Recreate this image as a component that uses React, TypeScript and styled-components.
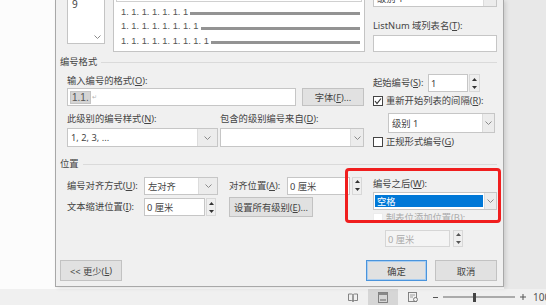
import React from "react";
import styled, { createGlobalStyle } from "styled-components";

const GlobalStyle = createGlobalStyle`
  html, body { margin: 0; padding: 0; }
  body { font-family: "Noto Sans", "Noto Sans CJK SC", sans-serif; }
`;

type MT = { $mt?: number };
const mt = (p: MT) => (p.$mt ? `margin-top: ${p.$mt}px;` : "");

const Screen = styled.div`
    width: 546px;
    height: 305px;
    overflow: hidden;
    display: flex;
    flex-direction: column;
    background: #fcfcfc;
    font-family: "Noto Sans", "Noto Sans CJK SC", sans-serif;
    font-size: 9.3px;
    color: #444;
`

const Workspace = styled.div`
    display: flex;
    height: 289px;
    flex: none;
`

const LeftMargin = styled.div`
    width: 55px;
    flex: none;
    background: #fcfcfc;
`

const RightPane = styled.div`
    flex: 1;
    background: #e8e8e8;
`

const Dialog = styled.div`
    position: relative;
    width: 449px;
    height: 287px;
    flex: none;
    box-sizing: border-box;
    border: 1px solid #a8a8a8;
    border-top: 0;
    background: #f0f0f0;
    padding: 0 6px 5px 4px;
    display: flex;
    flex-direction: column;
    box-shadow: 2px 1px 4px rgba(0, 0, 0, 0.12);
`

const TopArea = styled.div`
    display: flex;
    align-items: flex-start;
    gap: 8px;
    margin: -12px 0 0 7px;
`

const LevelList = styled.div`
    margin-top: 6px;
    width: 38px;
    height: 50px;
    box-sizing: border-box;
    background: #fff;
    border: 1px solid #c4c4c4;
    border-top: 0;
    padding: 4px 3px 4px 4px;
    display: flex;
    flex-direction: column;
    justify-content: space-between;
`

const LevelItem = styled.div`
    font-size: 10px;
    line-height: 12px;
`

const ScrollArrow = styled.div`
    align-self: flex-end;
    display: flex;
`

const Preview = styled.div`
    margin-top: 6px;
    width: 252px;
    height: 58px;
    box-sizing: border-box;
    background: #fff;
    border: 1px solid #c4c4c4;
    border-top: 0;
    padding: 0 4px 0 7px;
    display: flex;
    flex-direction: column;
`

const PreviewFrame = styled.div`
    height: 8px;
    box-sizing: border-box;
    margin: 0 -2px 1px -5px;
    border: 1px solid #d0d0d0;
    border-top: 0;
`

const PreviewRow = styled.div`
    height: 14.5px;
    display: flex;
    align-items: flex-end;
`

const PreviewNum = styled.span`
    font-family: "Liberation Sans", sans-serif;
    font-size: 9.3px;
    line-height: 12px;
    color: #555;
    white-space: nowrap;
`

const PreviewLine = styled.div`
    flex: 1;
    height: 3px;
    margin: 0 0 2.5px 2px;
    background: #939393;
`

const Column = styled.div<{ $w: number }>`
    width: ${p => p.$w}px;
    flex: none;
    display: flex;
    flex-direction: column;
`

const Label = styled.div<MT & { $w?: number; $muted?: boolean; $ml?: number }>`
    ${mt}
    ${p => (p.$w ? `width: ${p.$w}px; flex: none;` : "")}
    ${p => (p.$ml ? `margin-left: ${p.$ml}px;` : "")}
    height: 12px;
    line-height: 12px;
    white-space: nowrap;
    color: ${p => (p.$muted ? "#ababab" : "#444")};
    u { text-underline-offset: 1px; }
`

const TextBox = styled.div<MT & { $w: number; $h?: number; $disabled?: boolean; $ml?: number }>`
    ${mt}
    ${p => (p.$ml ? `margin-left: ${p.$ml}px;` : "")}
    width: ${p => p.$w}px;
    height: ${p => p.$h ?? 18}px;
    flex: none;
    box-sizing: border-box;
    background: ${p => (p.$disabled ? "#f4f4f4" : "#fff")};
    border: 1px solid ${p => (p.$disabled ? "#d6d6d6" : "#c6c6c6")};
    color: ${p => (p.$disabled ? "#ababab" : "#444")};
    display: flex;
    align-items: center;
    padding-left: 2px;
    white-space: nowrap;
`

const FieldCode = styled.span`
    background: #d4d4d4;
    border: 1px solid #c4c4c4;
    padding: 0 1px;
    line-height: 11px;
    font-family: "Liberation Sans", sans-serif;
    font-size: 10px;
    color: #555;
`

const ParaMark = styled.span`
    color: #b4b4b4;
    font-size: 6px;
    margin-left: 1px;
`

const Combo = styled.div<MT & { $w: number; $h?: number; $ml?: number }>`
    ${mt}
    ${p => (p.$ml ? `margin-left: ${p.$ml}px;` : "")}
    width: ${p => p.$w}px;
    height: ${p => p.$h ?? 18}px;
    flex: none;
    box-sizing: border-box;
    background: #fff;
    border: 1px solid #c6c6c6;
    display: flex;
`

const ComboText = styled.div`
    flex: 1;
    display: flex;
    align-items: center;
    padding-left: 3px;
    white-space: nowrap;
    overflow: hidden;
`

const SelectedText = styled.div`
    flex: 1;
    margin: 2px 1px 2px 1px;
    background: #0078d7;
    color: #fff;
    display: flex;
    align-items: center;
    padding-left: 2px;
`

const ComboArrow = styled.div<{ $w: number }>`
    width: ${p => p.$w}px;
    flex: none;
    display: flex;
    align-items: center;
    justify-content: center;
    background: #ececec;
    border-left: 1px solid #dcdcdc;
`

const Spin = styled.div<{ $w?: number; $h?: number; $ml?: number }>`
    width: ${p => p.$w ?? 10}px;
    height: ${p => p.$h ?? 18}px;
    margin-left: ${p => p.$ml ?? 1}px;
    flex: none;
    box-sizing: border-box;
    background: #efefef;
    border: 1px solid #d8d8d8;
    display: flex;
    align-items: center;
    justify-content: center;
`

const Button = styled.div<{ $w: number; $h?: number; $default?: boolean; $ml?: number }>`
    ${p => (p.$ml ? `margin-left: ${p.$ml}px;` : "")}
    width: ${p => p.$w}px;
    height: ${p => p.$h ?? 20}px;
    flex: none;
    box-sizing: border-box;
    background: #e1e1e1;
    border: 1px solid ${p => (p.$default ? "#4a94dc" : "#c2c2c2")};
    box-shadow: ${p => (p.$default ? "inset 0 0 0 1px #a9cdf0" : "none")};
    display: flex;
    align-items: center;
    justify-content: center;
    white-space: nowrap;
    u { text-underline-offset: 1px; }
`

const SectionHeader = styled.div<MT>`
    ${mt}
    display: flex;
    align-items: center;
    gap: 4px;
    height: 12px;
    line-height: 12px;
    &::after {
        content: "";
        flex: 1;
        height: 1px;
        background: #dadada;
    }
`

const SectionBody = styled.div`
    display: flex;
    gap: 9px;
    margin-left: 7px;
`

const FieldRow = styled.div<MT & { $h?: number; $ml?: number }>`
    ${mt}
    ${p => (p.$ml ? `margin-left: ${p.$ml}px;` : "")}
    ${p => (p.$h ? `height: ${p.$h}px;` : "")}
    display: flex;
    align-items: center;
`

const CheckRow = styled.div<MT>`
    ${mt}
    display: flex;
    align-items: center;
    gap: 3px;
    height: 12px;
`

const CheckBox = styled.span<{ $disabled?: boolean }>`
    width: 10px;
    height: 10px;
    flex: none;
    box-sizing: border-box;
    background: #fff;
    border: 1px solid ${p => (p.$disabled ? "#ececec" : "#444")};
    display: flex;
    align-items: center;
    justify-content: center;
`

const ButtonBar = styled.div`
    margin-top: auto;
    display: flex;
    align-items: flex-end;
`

const Spacer = styled.div`
    flex: 1;
`

const Highlight = styled.div`
    position: absolute;
    left: 289px;
    top: 168px;
    width: 156px;
    height: 55px;
    box-sizing: border-box;
    border: 3px solid #f01e1e;
    border-radius: 4px;
    pointer-events: none;
`

const StatusBar = styled.div`
    height: 16px;
    flex: none;
    background: #f0f0f0;
    display: flex;
    align-items: center;
    justify-content: flex-end;
    color: #555;
`

const StatusItem = styled.div<{ $ml?: number; $w?: number; $active?: boolean }>`
    margin-left: ${p => p.$ml ?? 0}px;
    ${p => (p.$w ? `width: ${p.$w}px;` : "")}
    height: 16px;
    flex: none;
    display: flex;
    align-items: center;
    justify-content: center;
    background: ${p => (p.$active ? "#d6d6d6" : "transparent")};
`

const ZoomText = styled.div`
    margin-left: 7px;
    width: 13px;
    flex: none;
    overflow: hidden;
    white-space: nowrap;
    font-size: 10px;
    color: #555;
`

const Chevron = () => (
    <svg width="7" height="4" viewBox="0 0 7 4">
        <polyline points="0.5,0.5 3.5,3.5 6.5,0.5" fill="none" stroke="#8a8a8a" strokeWidth="1" />
    </svg>
)

const SpinArrows = ({ color = "#333" }: { color?: string }) => (
    <svg width="5" height="11" viewBox="0 0 5 11">
        <polygon points="0,3 2.5,0 5,3" fill={color} />
        <polygon points="0,8 2.5,11 5,8" fill={color} />
    </svg>
)

const Tick = () => (
    <svg width="8" height="8" viewBox="0 0 8 8">
        <polyline points="1,4 3,6.5 7,1.5" fill="none" stroke="#333" strokeWidth="1.2" />
    </svg>
)

export default function App() {
    return (
        <>
            <GlobalStyle />
            <Screen>
                <Workspace>
                    <LeftMargin />
                    <Dialog>
                        <TopArea>
                            <LevelList>
                                <LevelItem>9</LevelItem>
                                <ScrollArrow><Chevron /></ScrollArrow>
                            </LevelList>
                            <Preview>
                                <PreviewFrame />
                                {[7, 8, 9].map(n => (
                                    <PreviewRow key={n}>
                                        <PreviewNum>{Array(n).fill("1").join(". ")}</PreviewNum>
                                        <PreviewLine />
                                    </PreviewRow>
                                ))}
                            </Preview>
                            <Column $w={124}>
                                <Combo $w={124} $h={19}>
                                    <ComboText>级别 1</ComboText>
                                    <ComboArrow $w={12}><Chevron /></ComboArrow>
                                </Combo>
                                <Label $mt={13}>ListNum 域列表名(<u>T</u>):</Label>
                                <TextBox $w={124} $h={17} $mt={3} />
                            </Column>
                        </TopArea>

                        <SectionHeader $mt={4}>编号格式</SectionHeader>
                        <SectionBody>
                            <Column $w={297}>
                                <Label $mt={7}>输入编号的格式(<u>O</u>):</Label>
                                <FieldRow $mt={1}>
                                    <TextBox $w={229}>
                                        <FieldCode>1.1.</FieldCode>
                                        <ParaMark>↵</ParaMark>
                                    </TextBox>
                                    <Button $w={62} $h={18} $ml={6}>字体(<u>F</u>)...</Button>
                                </FieldRow>
                                <FieldRow $mt={7}>
                                    <Label $w={153}>此级别的编号样式(<u>N</u>):</Label>
                                    <Label>包含的级别编号来自(<u>D</u>):</Label>
                                </FieldRow>
                                <FieldRow $mt={3}>
                                    <Combo $w={151} $h={19}>
                                        <ComboText>1, 2, 3, ...</ComboText>
                                        <ComboArrow $w={19}><Chevron /></ComboArrow>
                                    </Combo>
                                    <Combo $w={144} $h={19} $ml={2}>
                                        <ComboText />
                                        <ComboArrow $w={12}><Chevron /></ComboArrow>
                                    </Combo>
                                </FieldRow>
                            </Column>
                            <Column $w={124}>
                                <FieldRow $mt={6}>
                                    <Label $w={55}>起始编号(<u>S</u>):</Label>
                                    <TextBox $w={40}>1</TextBox>
                                    <Spin $w={11}><SpinArrows /></Spin>
                                </FieldRow>
                                <CheckRow $mt={3}>
                                    <CheckBox><Tick /></CheckBox>
                                    <Label>重新开始列表的间隔(<u>R</u>):</Label>
                                </CheckRow>
                                <Combo $w={107} $h={20} $mt={6} $ml={15}>
                                    <ComboText>级别 1</ComboText>
                                    <ComboArrow $w={11}><Chevron /></ComboArrow>
                                </Combo>
                                <CheckRow $mt={3}>
                                    <CheckBox />
                                    <Label>正规形式编号(<u>G</u>)</Label>
                                </CheckRow>
                            </Column>
                        </SectionBody>

                        <SectionHeader $mt={10}>位置</SectionHeader>
                        <SectionBody>
                            <Column $w={297}>
                                <FieldRow $mt={6} $h={19}>
                                    <Label $w={77}>编号对齐方式(<u>U</u>):</Label>
                                    <Combo $w={74}>
                                        <ComboText>左对齐</ComboText>
                                        <ComboArrow $w={18}><Chevron /></ComboArrow>
                                    </Combo>
                                    <Label $w={58} $ml={11}>对齐位置(<u>A</u>):</Label>
                                    <TextBox $w={63}>0 厘米</TextBox>
                                    <Spin $ml={2}><SpinArrows /></Spin>
                                </FieldRow>
                                <FieldRow $mt={2} $h={20}>
                                    <Label $w={77}>文本缩进位置(<u>I</u>):</Label>
                                    <TextBox $w={61}>0 厘米</TextBox>
                                    <Spin><SpinArrows /></Spin>
                                    <Button $w={84} $ml={13}>设置所有级别(<u>E</u>)...</Button>
                                </FieldRow>
                            </Column>
                            <Column $w={124}>
                                <Label $mt={8}>编号之后(<u>W</u>):</Label>
                                <Combo $w={124} $mt={2}>
                                    <SelectedText>空格</SelectedText>
                                    <ComboArrow $w={11}><Chevron /></ComboArrow>
                                </Combo>
                                <CheckRow $mt={2}>
                                    <CheckBox $disabled />
                                    <Label $muted>制表位添加位置(B):</Label>
                                </CheckRow>
                                <FieldRow $mt={6} $ml={12}>
                                    <TextBox $w={65} $h={17} $disabled>0 厘米</TextBox>
                                    <Spin $ml={3} $h={17}><SpinArrows color="#555" /></Spin>
                                </FieldRow>
                            </Column>
                        </SectionBody>

                        <ButtonBar>
                            <Button $w={62} $h={21}>&lt;&lt; 更少(<u>L</u>)</Button>
                            <Spacer />
                            <Button $w={61} $h={21} $default>确定</Button>
                            <Button $w={62} $h={21} $ml={8}>取消</Button>
                        </ButtonBar>

                        <Highlight />
                    </Dialog>
                    <RightPane />
                </Workspace>

                <StatusBar>
                    <StatusItem $w={10}>
                        <svg width="10" height="9" viewBox="0 0 10 9">
                            <path d="M0.5 1 H3.5 Q5 1 5 2.5 V8.5 Q5 7.5 3.5 7.5 H0.5 Z M9.5 1 H6.5 Q5 1 5 2.5 V8.5 Q5 7.5 6.5 7.5 H9.5 Z" fill="none" stroke="#777" strokeWidth="0.9" />
                        </svg>
                    </StatusItem>
                    <StatusItem $ml={10} $w={30} $active>
                        <svg width="10" height="11" viewBox="0 0 10 11">
                            <rect x="0.5" y="0.5" width="9" height="10" fill="none" stroke="#777" strokeWidth="0.9" />
                            <rect x="0.5" y="0.5" width="9" height="2.5" fill="#888" />
                            <line x1="2" y1="8" x2="8" y2="8" stroke="#888" strokeWidth="1.5" />
                        </svg>
                    </StatusItem>
                    <StatusItem $ml={10} $w={10}>
                        <svg width="10" height="10" viewBox="0 0 10 10">
                            <rect x="0.5" y="0.5" width="8" height="9" fill="none" stroke="#777" strokeWidth="0.9" />
                            <line x1="2" y1="3" x2="7" y2="3" stroke="#888" strokeWidth="0.8" />
                            <line x1="2" y1="5" x2="5" y2="5" stroke="#888" strokeWidth="0.8" />
                            <circle cx="7.5" cy="7.5" r="2" fill="#f0f0f0" stroke="#666" strokeWidth="0.8" />
                        </svg>
                    </StatusItem>
                    <StatusItem $ml={15} $w={5}>
                        <svg width="5" height="1" viewBox="0 0 5 1"><rect width="5" height="1" fill="#555" /></svg>
                    </StatusItem>
                    <StatusItem $ml={5} $w={72}>
                        <svg width="72" height="10" viewBox="0 0 72 10">
                            <line x1="0" y1="5" x2="72" y2="5" stroke="#666" strokeWidth="1" />
                            <rect x="30" y="1" width="3" height="9" fill="#444" />
                        </svg>
                    </StatusItem>
                    <StatusItem $ml={5} $w={6}>
                        <svg width="6" height="6" viewBox="0 0 6 6">
                            <rect x="0" y="2.5" width="6" height="1" fill="#555" />
                            <rect x="2.5" y="0" width="1" height="6" fill="#555" />
                        </svg>
                    </StatusItem>
                    <ZoomText>100%</ZoomText>
                </StatusBar>
            </Screen>
        </>
    )
}
